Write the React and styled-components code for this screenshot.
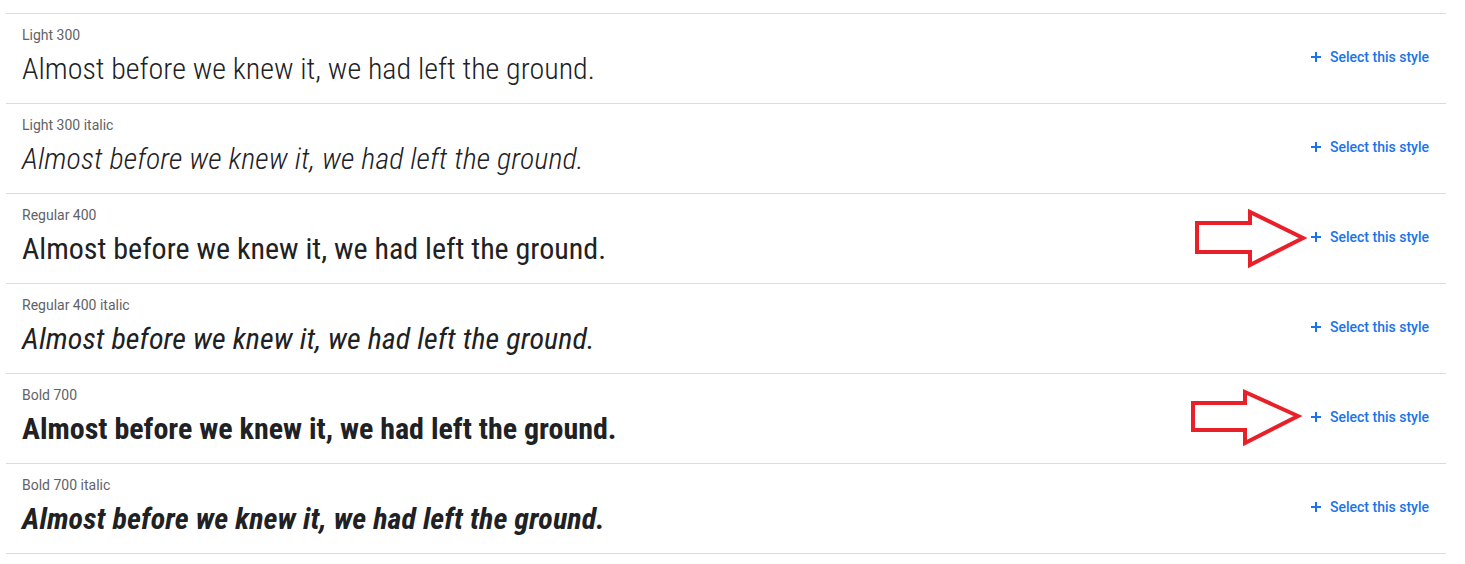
import React from "react";
import styled, { createGlobalStyle } from "styled-components";

const GlobalStyle = createGlobalStyle`
  body {
    margin: 0;
    background: #fff;
    font-family: Roboto, "Noto Sans", sans-serif;
  }
`;

const ARROW_A = "M7 19H60V8L113 34L60 61V48H7Z";
const ARROW_B = "M3 19H55V8L108 32L55 59V46H3Z";

const styles = [
  { label: "Light 300", weight: 300, italic: false },
  { label: "Light 300 italic", weight: 300, italic: true },
  { label: "Regular 400", weight: 400, italic: false, arrow: ARROW_A },
  { label: "Regular 400 italic", weight: 400, italic: true },
  { label: "Bold 700", weight: 700, italic: false, arrow: ARROW_B },
  { label: "Bold 700 italic", weight: 700, italic: true },
];

const Page = styled.div`
  width: 1440px;
  margin: 13px 0 0 6px;
  border-top: 1px solid #dadce0;
`;

const Row = styled.div`
  position: relative;
  height: 89px;
  border-bottom: 1px solid #dadce0;
  display: flex;
  align-items: center;
  justify-content: space-between;
  padding: 0 17px 0 16px;
  box-sizing: content-box;
`;

const Info = styled.div`
  align-self: flex-start;
  display: flex;
  flex-direction: column;
  padding-top: 11px;
`;

const Label = styled.div`
  font-size: 14px;
  line-height: 20px;
  color: #5f6368;
`;

const Sample = styled.div`
  font-family: "Roboto Condensed", Roboto, sans-serif;
  font-stretch: 75%;
  font-size: 30px;
  line-height: 40px;
  margin-top: 4px;
  color: #202124;
  font-weight: ${(p) => p.$weight};
  font-style: ${(p) => (p.$italic ? "italic" : "normal")};
  letter-spacing: ${(p) => (p.$italic ? "0.1px" : "0")};
`;

const SelectButton = styled.button`
  display: flex;
  align-items: center;
  gap: 8px;
  border: none;
  background: none;
  padding: 0;
  margin-top: -3px;
  font-family: Roboto, sans-serif;
  font-size: 14px;
  font-weight: 500;
  color: #1a73e8;
  cursor: pointer;
`;

const Arrow = styled.svg`
  position: absolute;
  left: 1184px;
  top: 10px;
`;

const Plus = () => (
  <svg width="12" height="12" viewBox="0 0 12 12">
    <path d="M6 1v10M1 6h10" stroke="#1a73e8" strokeWidth="2" />
  </svg>
);

export default function App() {
  return (
    <>
      <GlobalStyle />
      <Page>
        {styles.map((s) => (
          <Row key={s.label}>
            <Info>
              <Label>{s.label}</Label>
              <Sample $weight={s.weight} $italic={s.italic}>
                Almost before we knew it, we had left the ground.
              </Sample>
            </Info>
            {s.arrow && (
              <Arrow width="120" height="70" viewBox="0 0 120 70">
                <path
                  d={s.arrow}
                  fill="none"
                  stroke="#e8202a"
                  strokeWidth="4"
                  strokeLinejoin="miter"
                />
              </Arrow>
            )}
            <SelectButton>
              <Plus />
              Select this style
            </SelectButton>
          </Row>
        ))}
      </Page>
    </>
  );
}
